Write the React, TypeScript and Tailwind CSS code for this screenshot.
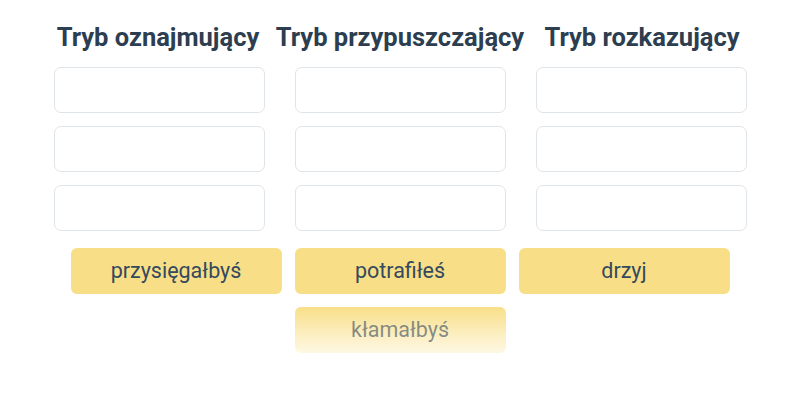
import React from "react";

const headings = ["Tryb oznajmujący", "Tryb przypuszczający", "Tryb rozkazujący"];

export default function App() {
  return (
    <div
      className="w-[800px] h-[400px] bg-white flex flex-col items-center pt-[21px]"
      style={{ fontFamily: "Roboto, 'Noto Sans', sans-serif" }}
    >
      <div className="grid grid-cols-[211px_211px_211px] gap-x-[31px]">
        {headings.map((h) => (
          <div key={h} className="flex justify-center">
            <div className="whitespace-nowrap text-[25.5px] leading-[32px] font-bold text-[#2c3e50]">{h}</div>
          </div>
        ))}
      </div>
      <div className="mt-[14px] grid grid-cols-[211px_211px_211px] gap-x-[30px] gap-y-[13px]">
        {Array.from({ length: 9 }).map((_, i) => (
          <div key={i} className="h-[46px] rounded-[7px] border border-[#dfe4e8] bg-white" />
        ))}
      </div>
      <div className="mt-[17px] w-[660px] flex flex-wrap justify-center gap-x-[13px] gap-y-[13px]">
        {["przysięgałbyś", "potrafiłeś", "drzyj"].map((w) => (
          <div
            key={w}
            className="w-[211px] h-[46px] rounded-[6px] bg-[#f8df87] flex items-center justify-center text-[21.5px] text-[#34495e]"
          >
            {w}
          </div>
        ))}
        <div className="w-[211px] h-[46px] rounded-[6px] bg-gradient-to-b from-[#f8df87] to-[#fef8e4] flex items-center justify-center text-[21.5px] text-[#34495e]/60">
          kłamałbyś
        </div>
      </div>
    </div>
  );
}
